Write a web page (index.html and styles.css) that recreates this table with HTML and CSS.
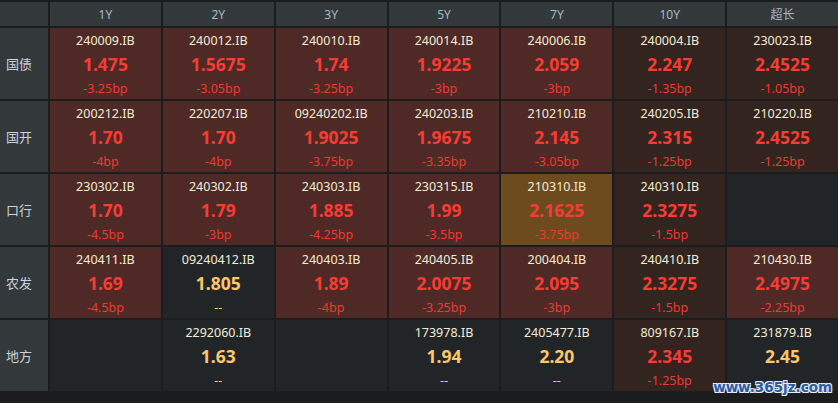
FILE: index.html
```html
<!DOCTYPE html>
<html>

<head>
    <title>利率债收益率</title>
    <link rel="stylesheet" href="styles.css">
</head>

<body>
    <div id="main">
        <div class="grid">
            <div class="head"></div>
            <div class="head">1Y</div>
            <div class="head">2Y</div>
            <div class="head">3Y</div>
            <div class="head">5Y</div>
            <div class="head">7Y</div>
            <div class="head">10Y</div>
            <div class="head">超长</div>

            <div class="label">国债</div>
            <div class="cell up"><div class="code">240009.IB</div><div class="val">1.475</div><div class="bp">-3.25bp</div></div>
            <div class="cell up"><div class="code">240012.IB</div><div class="val">1.5675</div><div class="bp">-3.05bp</div></div>
            <div class="cell up"><div class="code">240010.IB</div><div class="val">1.74</div><div class="bp">-3.25bp</div></div>
            <div class="cell up"><div class="code">240014.IB</div><div class="val">1.9225</div><div class="bp">-3bp</div></div>
            <div class="cell up"><div class="code">240006.IB</div><div class="val">2.059</div><div class="bp">-3bp</div></div>
            <div class="cell low"><div class="code">240004.IB</div><div class="val">2.247</div><div class="bp">-1.35bp</div></div>
            <div class="cell low"><div class="code">230023.IB</div><div class="val">2.4525</div><div class="bp">-1.05bp</div></div>

            <div class="label">国开</div>
            <div class="cell up"><div class="code">200212.IB</div><div class="val">1.70</div><div class="bp">-4bp</div></div>
            <div class="cell up"><div class="code">220207.IB</div><div class="val">1.70</div><div class="bp">-4bp</div></div>
            <div class="cell up"><div class="code">09240202.IB</div><div class="val">1.9025</div><div class="bp">-3.75bp</div></div>
            <div class="cell up"><div class="code">240203.IB</div><div class="val">1.9675</div><div class="bp">-3.35bp</div></div>
            <div class="cell up"><div class="code">210210.IB</div><div class="val">2.145</div><div class="bp">-3.05bp</div></div>
            <div class="cell low"><div class="code">240205.IB</div><div class="val">2.315</div><div class="bp">-1.25bp</div></div>
            <div class="cell low"><div class="code">210220.IB</div><div class="val">2.4525</div><div class="bp">-1.25bp</div></div>

            <div class="label">口行</div>
            <div class="cell up"><div class="code">230302.IB</div><div class="val">1.70</div><div class="bp">-4.5bp</div></div>
            <div class="cell up"><div class="code">240302.IB</div><div class="val">1.79</div><div class="bp">-3bp</div></div>
            <div class="cell up"><div class="code">240303.IB</div><div class="val">1.885</div><div class="bp">-4.25bp</div></div>
            <div class="cell up"><div class="code">230315.IB</div><div class="val">1.99</div><div class="bp">-3.5bp</div></div>
            <div class="cell hot"><div class="code">210310.IB</div><div class="val">2.1625</div><div class="bp">-3.75bp</div></div>
            <div class="cell low"><div class="code">240310.IB</div><div class="val">2.3275</div><div class="bp">-1.5bp</div></div>
            <div class="cell"></div>

            <div class="label">农发</div>
            <div class="cell up"><div class="code">240411.IB</div><div class="val">1.69</div><div class="bp">-4.5bp</div></div>
            <div class="cell"><div class="code">09240412.IB</div><div class="val flat">1.805</div><div class="bp flat">--</div></div>
            <div class="cell up"><div class="code">240403.IB</div><div class="val">1.89</div><div class="bp">-4bp</div></div>
            <div class="cell up"><div class="code">240405.IB</div><div class="val">2.0075</div><div class="bp">-3.25bp</div></div>
            <div class="cell up"><div class="code">200404.IB</div><div class="val">2.095</div><div class="bp">-3bp</div></div>
            <div class="cell low"><div class="code">240410.IB</div><div class="val">2.3275</div><div class="bp">-1.5bp</div></div>
            <div class="cell up"><div class="code">210430.IB</div><div class="val">2.4975</div><div class="bp">-2.25bp</div></div>

            <div class="label">地方</div>
            <div class="cell"></div>
            <div class="cell"><div class="code">2292060.IB</div><div class="val flat">1.63</div><div class="bp flat">--</div></div>
            <div class="cell"></div>
            <div class="cell"><div class="code">173978.IB</div><div class="val flat">1.94</div><div class="bp flat">--</div></div>
            <div class="cell"><div class="code">2405477.IB</div><div class="val flat">2.20</div><div class="bp flat">--</div></div>
            <div class="cell low"><div class="code">809167.IB</div><div class="val">2.345</div><div class="bp">-1.25bp</div></div>
            <div class="cell"><div class="code">231879.IB</div><div class="val flat">2.45</div></div>
        </div>
        <div class="mark">www.365jz.com</div>
    </div>
</body>

</html>
```

FILE: styles.css
```css
body {
    margin: 0;
    background-color: #1b1c1e;
    font-family: "Noto Sans", "Noto Sans CJK SC", sans-serif;
}

#main {
    position: relative;
    width: 838px;
    height: 403px;
    padding-top: 2px;
    box-sizing: border-box;
}

.grid {
    display: grid;
    grid-template-columns: 48px repeat(7, 1fr);
    grid-template-rows: 24px repeat(5, 71px);
    gap: 2px;
}

.head {
    background-color: #33383b;
    color: #a9b9c6;
    font-size: 12px;
    display: flex;
    align-items: center;
    justify-content: center;
}

.label {
    background-color: #33383b;
    color: #c9d3dc;
    font-size: 13px;
    display: flex;
    align-items: center;
    padding-left: 6px;
}

.cell {
    background-color: #212528;
    display: flex;
    flex-direction: column;
    align-items: center;
    padding-top: 3px;
}

.cell.up {
    background-color: #4f2925;
}

.cell.low {
    background-color: #33241f;
}

.cell.hot {
    background-color: #6e4b1e;
}

.code {
    color: #f2ecd6;
    font-size: 12.5px;
    line-height: 20px;
}

.val {
    color: #f83b33;
    font-size: 17.5px;
    font-weight: bold;
    line-height: 26px;
}

.bp {
    color: #ec3a30;
    font-size: 12.5px;
    line-height: 24px;
}

.flat {
    color: #fcc767;
}

.mark {
    position: absolute;
    right: 6px;
    bottom: 8px;
    font-family: "DejaVu Sans", sans-serif;
    font-size: 13.5px;
    font-weight: bold;
    color: #2d5b9e;
    text-shadow: 1px 1px 0 #e8eef6, -1px -1px 0 #e8eef6, 1px -1px 0 #e8eef6, -1px 1px 0 #e8eef6;
}
```
